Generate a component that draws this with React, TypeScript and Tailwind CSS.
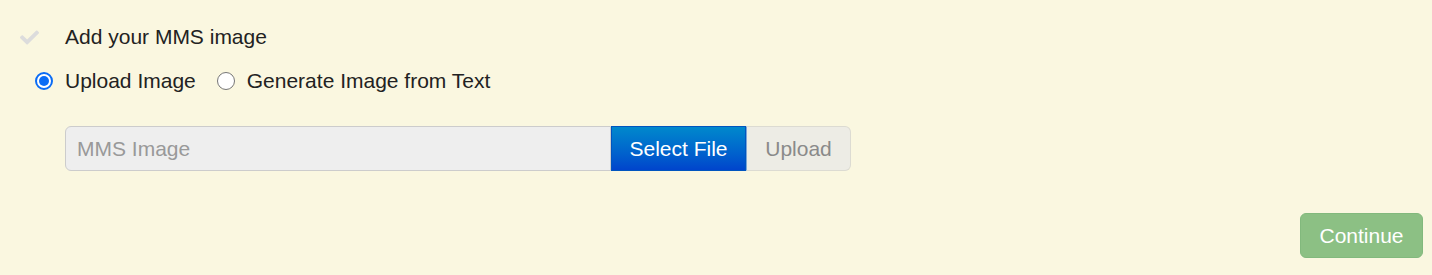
import { FaCheck } from "react-icons/fa";

function Radio({ checked }: { checked?: boolean }) {
    if (checked) {
        return (
            <span className="flex h-[18px] w-[18px] items-center justify-center rounded-full border-2 border-[#0a6cf5] bg-white">
                <span className="h-[10px] w-[10px] rounded-full bg-[#0a6cf5]" />
            </span>
        );
    }
    return <span className="h-[18px] w-[18px] rounded-full border-[1.5px] border-[#767676] bg-white" />;
}

export default function App() {
    return (
        <div className="flex h-[275px] w-full flex-col bg-[#faf7e0] text-[21px] text-[#222] font-['Liberation_Sans',Arial,sans-serif]">
            <div className="mt-[20px] flex h-[34px] items-center">
                <div className="flex w-[65px] justify-start pl-[20px]">
                    <FaCheck size={19} color="#dcdcdc" />
                </div>
                <span>Add your MMS image</span>
            </div>

            <div className="mt-[10px] flex h-[34px] items-center pl-[35px]">
                <label className="flex items-center gap-[12px]">
                    <Radio checked />
                    <span>Upload Image</span>
                </label>
                <label className="ml-[21px] flex items-center gap-[12px]">
                    <Radio />
                    <span>Generate Image from Text</span>
                </label>
            </div>

            <div className="mt-[28px] ml-[65px] flex h-[45px] w-[786px]">
                <div className="flex flex-1 items-center rounded-l-[6px] border border-[#cccccc] bg-[#eeeeee] px-[11px] text-[#999999]">
                    MMS Image
                </div>
                <button className="flex w-[135px] items-center justify-center border border-[#0055bf] bg-gradient-to-b from-[#0088cc] to-[#0044cc] text-white">
                    Select File
                </button>
                <button className="flex w-[105px] items-center justify-center rounded-r-[6px] border border-[#dcdbd2] border-l-[#7aa5d8] bg-[#edece5] text-[#8a8a8a]">
                    Upload
                </button>
            </div>

            <div className="mt-[42px] flex justify-end pr-[9px]">
                <button className="h-[45px] w-[123px] rounded-[6px] border border-[#82b97d] bg-[#8cc084] text-white">
                    Continue
                </button>
            </div>
        </div>
    );
}
